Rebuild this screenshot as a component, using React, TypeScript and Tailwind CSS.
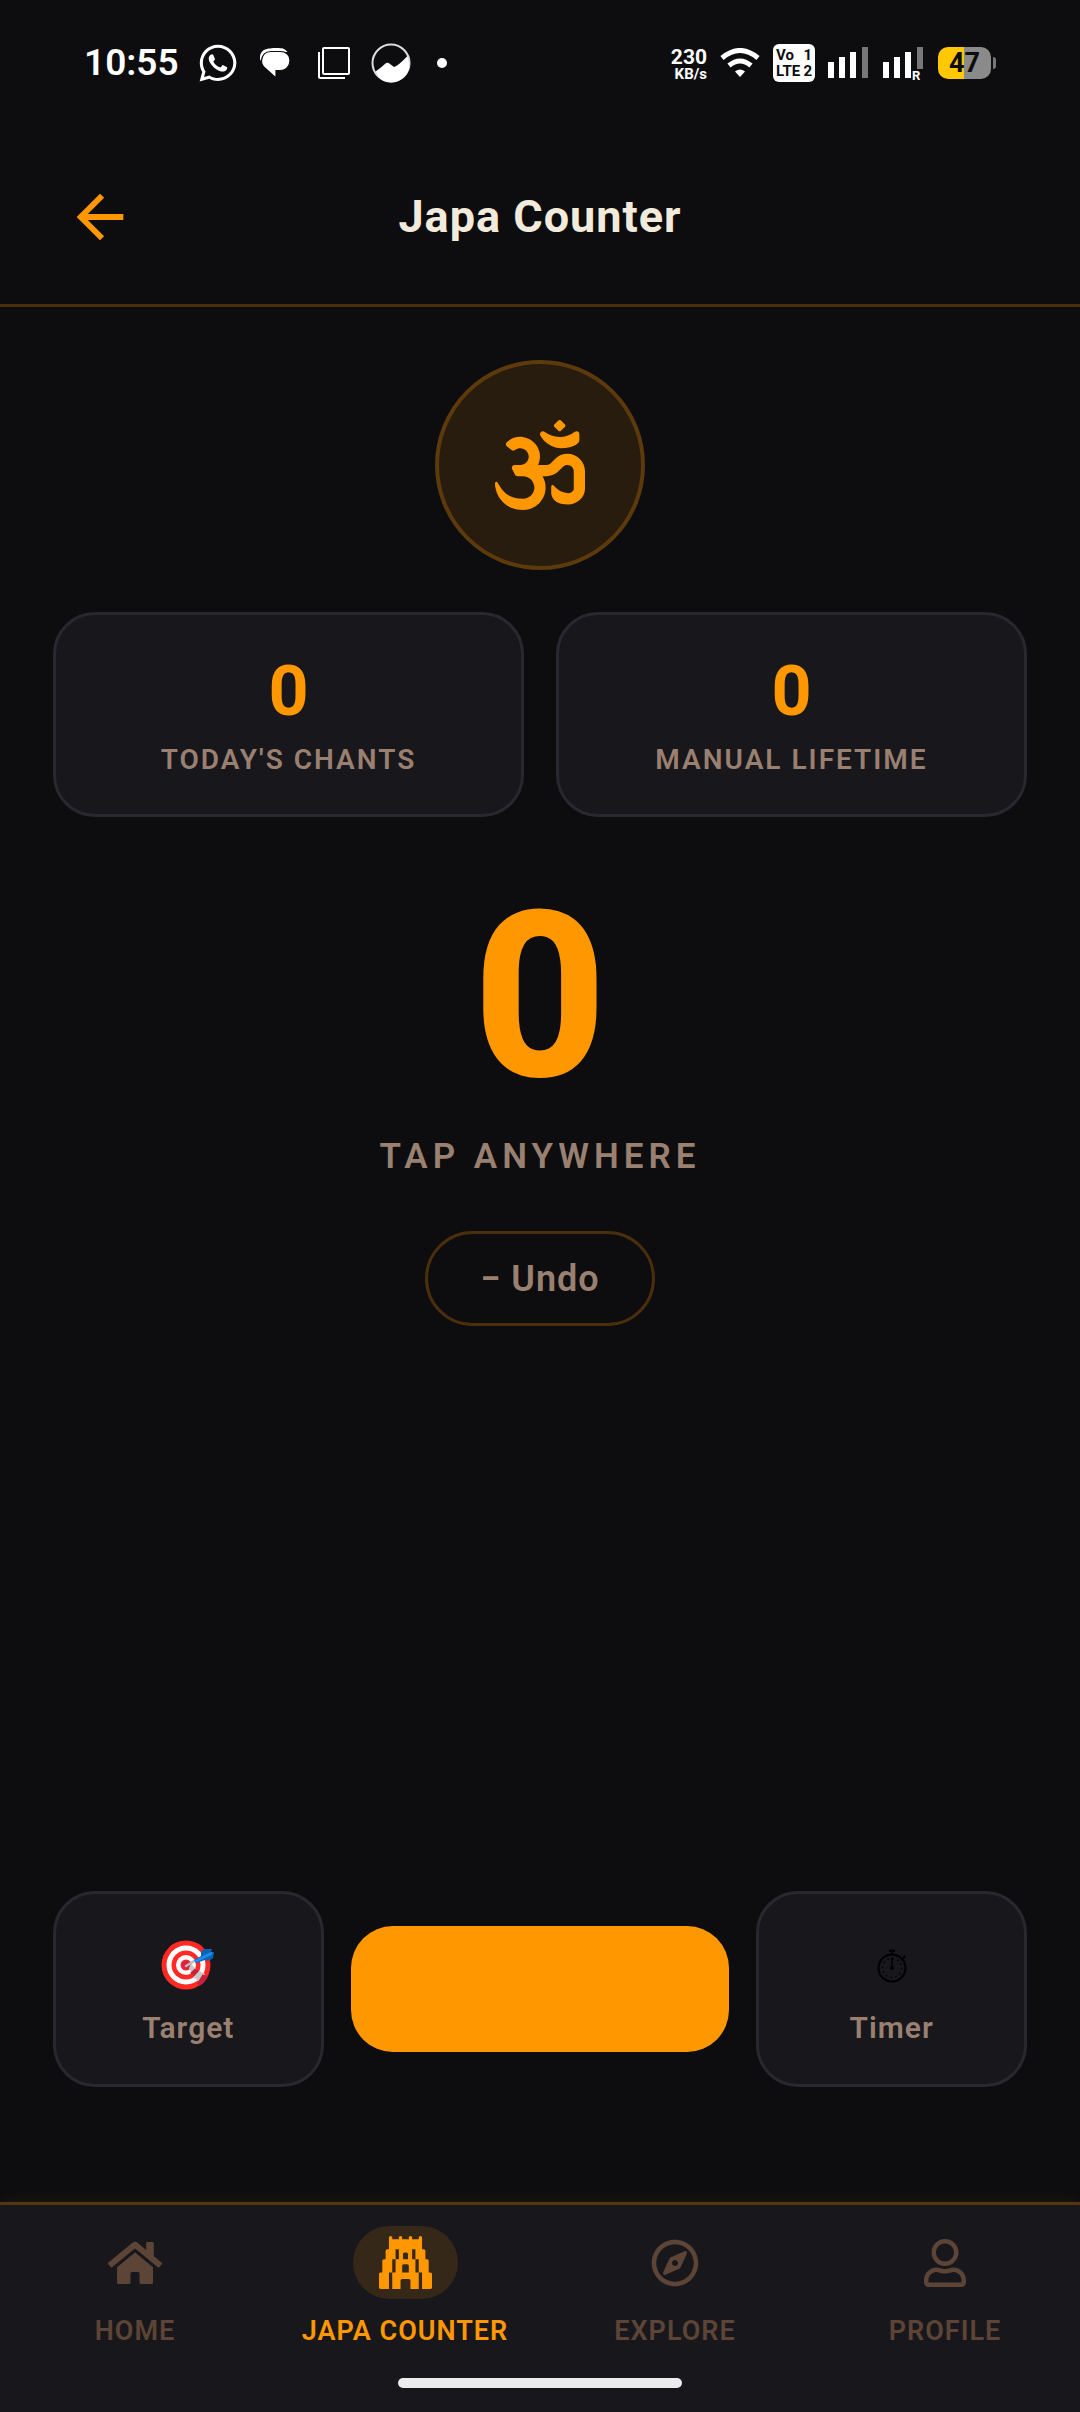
import {useCallback, useState} from 'react';
import type {ReactNode} from 'react';
import {FaGopuram, FaHome, FaOm, FaRegCompass, FaRegUser, FaWhatsapp} from 'react-icons/fa';
import {MdArrowBack} from 'react-icons/md';

const ChatIcon = () => (
    <svg width="32" height="32" viewBox="0 0 32 32" aria-hidden="true">
        <path d="M1.500 14C0 9 1.500 4.500 6 2.500C9 1 20 .5 24 1.500Q27 2.500 28.500 5L20 4.500H12Q4 5 1.500 14Z" fill="#fff"/>
        <path d="M2.500 14C3 8.500 6 4.500 12 4.500H21C27.500 4.500 31 8.500 31 13.500S27.500 23.500 21 23.500H17V31L6.500 21.500C4 19.500 2.500 17.500 2.500 14Z" fill="#fff" stroke="#0d0d0f" strokeWidth="1.200"/>
    </svg>
);

const WindowsIcon = () => (
    <svg width="34" height="34" viewBox="0 0 34 34" fill="none" stroke="#fff" strokeWidth="2" aria-hidden="true">
        <rect x="6" y="2" width="26" height="26" rx="1"/>
        <path d="M2 6V31Q2 32 3 32H28"/>
    </svg>
);

const PhotoIcon = () => (
    <svg width="40" height="40" viewBox="0 0 40 40" aria-hidden="true">
        <circle cx="20" cy="20" r="18.500" fill="none" stroke="#ddd" strokeWidth="2"/>
        <path d="M4.500 28.500Q11 24 14.500 20.500Q16.500 19 19 21L23 24Q27 23 36.500 13Q41 26 33.500 34Q27 39.500 20 39.500Q9 39.500 4.500 28.500Z" fill="#fff"/>
    </svg>
);

const WifiBars = () => (
    <svg width="40" height="30" viewBox="0 0 40 30" aria-hidden="true">
        <path d="M2 10Q20-5 38 10" fill="none" stroke="#fff" strokeWidth="5"/>
        <path d="M9 17.500Q20 8.500 31 17.500" fill="none" stroke="#fff" strokeWidth="5"/>
        <path d="M15 23.500Q20 19.500 25 23.500L20 29Z" fill="#fff"/>
    </svg>
);

const SignalBars = ({roaming = false}: {roaming?: boolean}) => (
    <svg width="42" height="38" viewBox="0 -3 42 38" aria-hidden="true">
        <path d="M0 15H6V31H0ZM11 10H17V31H11ZM22 5H28V31H22Z" fill="#fff"/>
        <path d={roaming ? 'M34 0H40V22H34Z' : 'M34 0H40V31H34Z'} fill="#777"/>
        {roaming && (
            <>
                <path d="M28 23H42V34H28Z" fill="#0d0d0f"/>
                <text x="29" y="33" fill="#fff" fontSize="13" fontWeight="700">R</text>
            </>
        )}
    </svg>
);

const TargetIcon = () => (
    <svg width="54" height="50" viewBox="0 0 54 50" aria-hidden="true">
        <circle cx="25" cy="25" r="24.500" fill="#ff2a23"/>
        <circle cx="25" cy="25" r="19.500" fill="#fff"/>
        <circle cx="25" cy="25" r="14.500" fill="#ff2a23"/>
        <circle cx="25" cy="25" r="10" fill="#fff"/>
        <circle cx="25" cy="25" r="5.500" fill="#f0283b"/>
        <path d="M27 27L30 24L36 30L32 34Z" fill="#c9c9c9"/>
        <path d="M29 33L34 28.500L38 31L34 36Z" fill="#c9203c"/>
        <path d="M32.500 37L38 31L44 34L38.500 42Z" fill="#c9c9c9"/>
        <path d="M36 43.500L41.500 34.500L47 36Q44 43 38.500 46Z" fill="#c9203c"/>
        <circle cx="25" cy="25" r="4" fill="#dd2239"/>
        <path d="M25 26L34 20.500" stroke="#b9bdc2" strokeWidth="2.500" strokeLinecap="round"/>
        <path d="M33 20L40 16Q39 10 44 9H51L50 12H53L52 18Q48 22 44 20L35 23Z" fill="#0d63b0"/>
        <path d="M34 21.500L51 13" stroke="#1d8cf2" strokeWidth="3"/>
    </svg>
);

const StopwatchIcon = () => (
    <svg width="54" height="50" viewBox="0 0 54 50" aria-hidden="true">
        <circle cx="27" cy="28" r="13.500" fill="none" stroke="#000" strokeWidth="2"/>
        <circle cx="27" cy="28" r="9.500" fill="none" stroke="#000" strokeWidth="1.500" strokeDasharray="1.500 3.474"/>
        <path d="M24 9.500H30V12H24ZM38 16L39.500 15L41 17L39.500 18.500Z" fill="#000"/>
        <path d="M27 12V14M37 19.500L39 17.500M27 17V28" stroke="#000" strokeWidth="1.500"/>
        <circle cx="27" cy="28" r="2" fill="#000"/>
    </svg>
);

const StatusBar = () => (
    <div className="flex h-[126px] items-center justify-between px-21 text-white">
        <div className="flex items-center">
            <span className="text-[37px] leading-10 font-semibold">10:55</span>
            <FaWhatsapp size={42} className="ml-[18px]"/>
            <span className="ml-5 flex items-center gap-[26px]">
                <ChatIcon/>
                <WindowsIcon/>
            </span>
            <span className="ml-5 flex items-center gap-[26px]">
                <PhotoIcon/>
                <span className="size-[10px] rounded-full bg-white"/>
            </span>
        </div>
        <div className="flex items-center gap-[13px]">
            <div className="flex flex-col items-end pt-1 font-bold">
                <span className="text-[21px] leading-[18px]">230</span>
                <span className="text-[15px] leading-4">KB/s</span>
            </div>
            <WifiBars/>
            <div className="grid h-[38px] w-[42px] grid-cols-[auto_auto] content-center justify-between rounded-md bg-white px-[3px] text-[15px] leading-4 font-bold text-[#0d0d0f]">
                <span>Vo</span>
                <span>1</span>
                <span>LTE</span>
                <span>2</span>
            </div>
            <SignalBars/>
            <SignalBars roaming/>
            <div className="flex items-center gap-[2px]">
                <div className="h-8 w-[53px] rounded-[10px] bg-linear-to-r from-[#ffc800] from-50% to-[#8a8a8a] to-50% text-center text-[27px] leading-8 font-bold text-[#0d0d0f]">
                    47
                </div>
                <span className="h-3 w-[3px] rounded-r-sm bg-[#777]"/>
            </div>
        </div>
    </div>
);

const StatCard = ({value, label}: {value: number; label: string}) => (
    <div className="flex flex-1 flex-col items-center rounded-[42px] border-[3px] border-[#29282e] bg-[#18171c] pt-9 pb-[38px]">
        <span className="text-[70px] leading-20 font-bold text-[#ff9800]">{value}</span>
        <span className="mt-[13px] text-[28px] leading-8 font-semibold tracking-[2px] text-[#9a8070]">{label}</span>
    </div>
);

const ActionButton = ({icon, label}: {icon: ReactNode; label: string}) => (
    <button
        className="flex flex-col items-center rounded-[42px] border-[3px] border-[#29282e] bg-[#18171c] pt-[46px] pb-[38px] active:bg-[#29282e]"
    >
        {icon}
        <span className="mt-5 text-[30px] leading-9 font-semibold tracking-[1px] text-[#9a8070]">{label}</span>
    </button>
);

const navItems = [
    {label: 'HOME', icon: <FaHome size={54}/>},
    {label: 'JAPA COUNTER', icon: <FaGopuram size={53}/>, active: true},
    {label: 'EXPLORE', icon: <FaRegCompass size={48}/>},
    {label: 'PROFILE', icon: <FaRegUser size={48}/>},
];

const BottomNav = () => (
    <nav className="border-t-[3px] border-[#54360f] bg-[#18171c] pb-6 shadow-[0_-4px_12px_rgba(255,152,0,0.06)]">
        <div className="grid grid-cols-4">
            {navItems.map(({label, icon, active}) => (
                <a
                    key={label}
                    href="#"
                    aria-current={active ? 'page' : undefined}
                    className={`flex flex-col items-center pt-[21px] whitespace-nowrap ${active ? 'text-[#ff9800]' : 'text-[#5c4436]'}`}
                >
                    <span className={`flex h-[73px] w-[105px] items-center justify-center rounded-full ${active ? 'bg-[#362818]' : ''}`}>
                        {icon}
                    </span>
                    <span className="mt-4 text-[27px] leading-8 font-semibold tracking-[1px]">{label}</span>
                </a>
            ))}
        </div>
        <div className="mx-auto mt-[31px] h-[10px] w-[284px] rounded-full bg-[#ececec]"/>
    </nav>
);

const App = () => {
    const [count, setCount] = useState(0);

    const chant = useCallback(() => setCount(c => c + 1), []);
    const undo = useCallback(() => setCount(c => Math.max(0, c - 1)), []);

    return (
        <div className="flex min-h-screen flex-col bg-[#0d0d0f] font-[Roboto,sans-serif]">
            <StatusBar/>
            <header className="grid h-[181px] grid-cols-[1fr_auto_1fr] items-center border-b-[3px] border-[#4b2f0d] px-[65px] pt-[3px]">
                <button aria-label="Back" className="w-max text-[#ff9800]">
                    <MdArrowBack size={70}/>
                </button>
                <h1 className="text-[45px] leading-14 font-bold tracking-[1px] text-[#f2eadb]">Japa Counter</h1>
            </header>

            <main className="flex flex-1 flex-col px-[53px] pt-[53px]">
                <div className="mx-auto flex size-[210px] items-center justify-center rounded-full border-4 border-[#5c3a0c] bg-[#281c0f] text-[#ff9800]">
                    <FaOm size={90}/>
                </div>

                <div className="mt-[42px] flex gap-8">
                    <StatCard value={count} label="TODAY'S CHANTS"/>
                    <StatCard value={count} label="MANUAL LIFETIME"/>
                </div>

                <div className="mt-[45px] flex flex-col items-center">
                    <span className="text-[232px] leading-[270px] font-extrabold text-[#ff9800]">{count}</span>
                    <span className="mt-px text-[35px] leading-12 font-semibold tracking-[5px] text-[#9a8070]">TAP ANYWHERE</span>
                    <button
                        onClick={undo}
                        className="mt-[50px] rounded-full border-[3px] border-[#4b2f0d] px-[52px] pt-[23px] pb-[21px] text-[36px] leading-[45px] font-semibold tracking-[1px] text-[#9a8070]"
                    >
                        − Undo
                    </button>
                </div>

                <div className="mt-auto mb-[115px] grid grid-cols-[5fr_7fr_5fr] items-center gap-[27px]">
                    <ActionButton icon={<TargetIcon/>} label="Target"/>
                    <button
                        onClick={chant}
                        aria-label="Chant"
                        className="h-[126px] rounded-[42px] bg-[#ff9800] active:bg-[#e68900]"
                    />
                    <ActionButton icon={<StopwatchIcon/>} label="Timer"/>
                </div>
            </main>

            <BottomNav/>
        </div>
    );
};

export default App;
